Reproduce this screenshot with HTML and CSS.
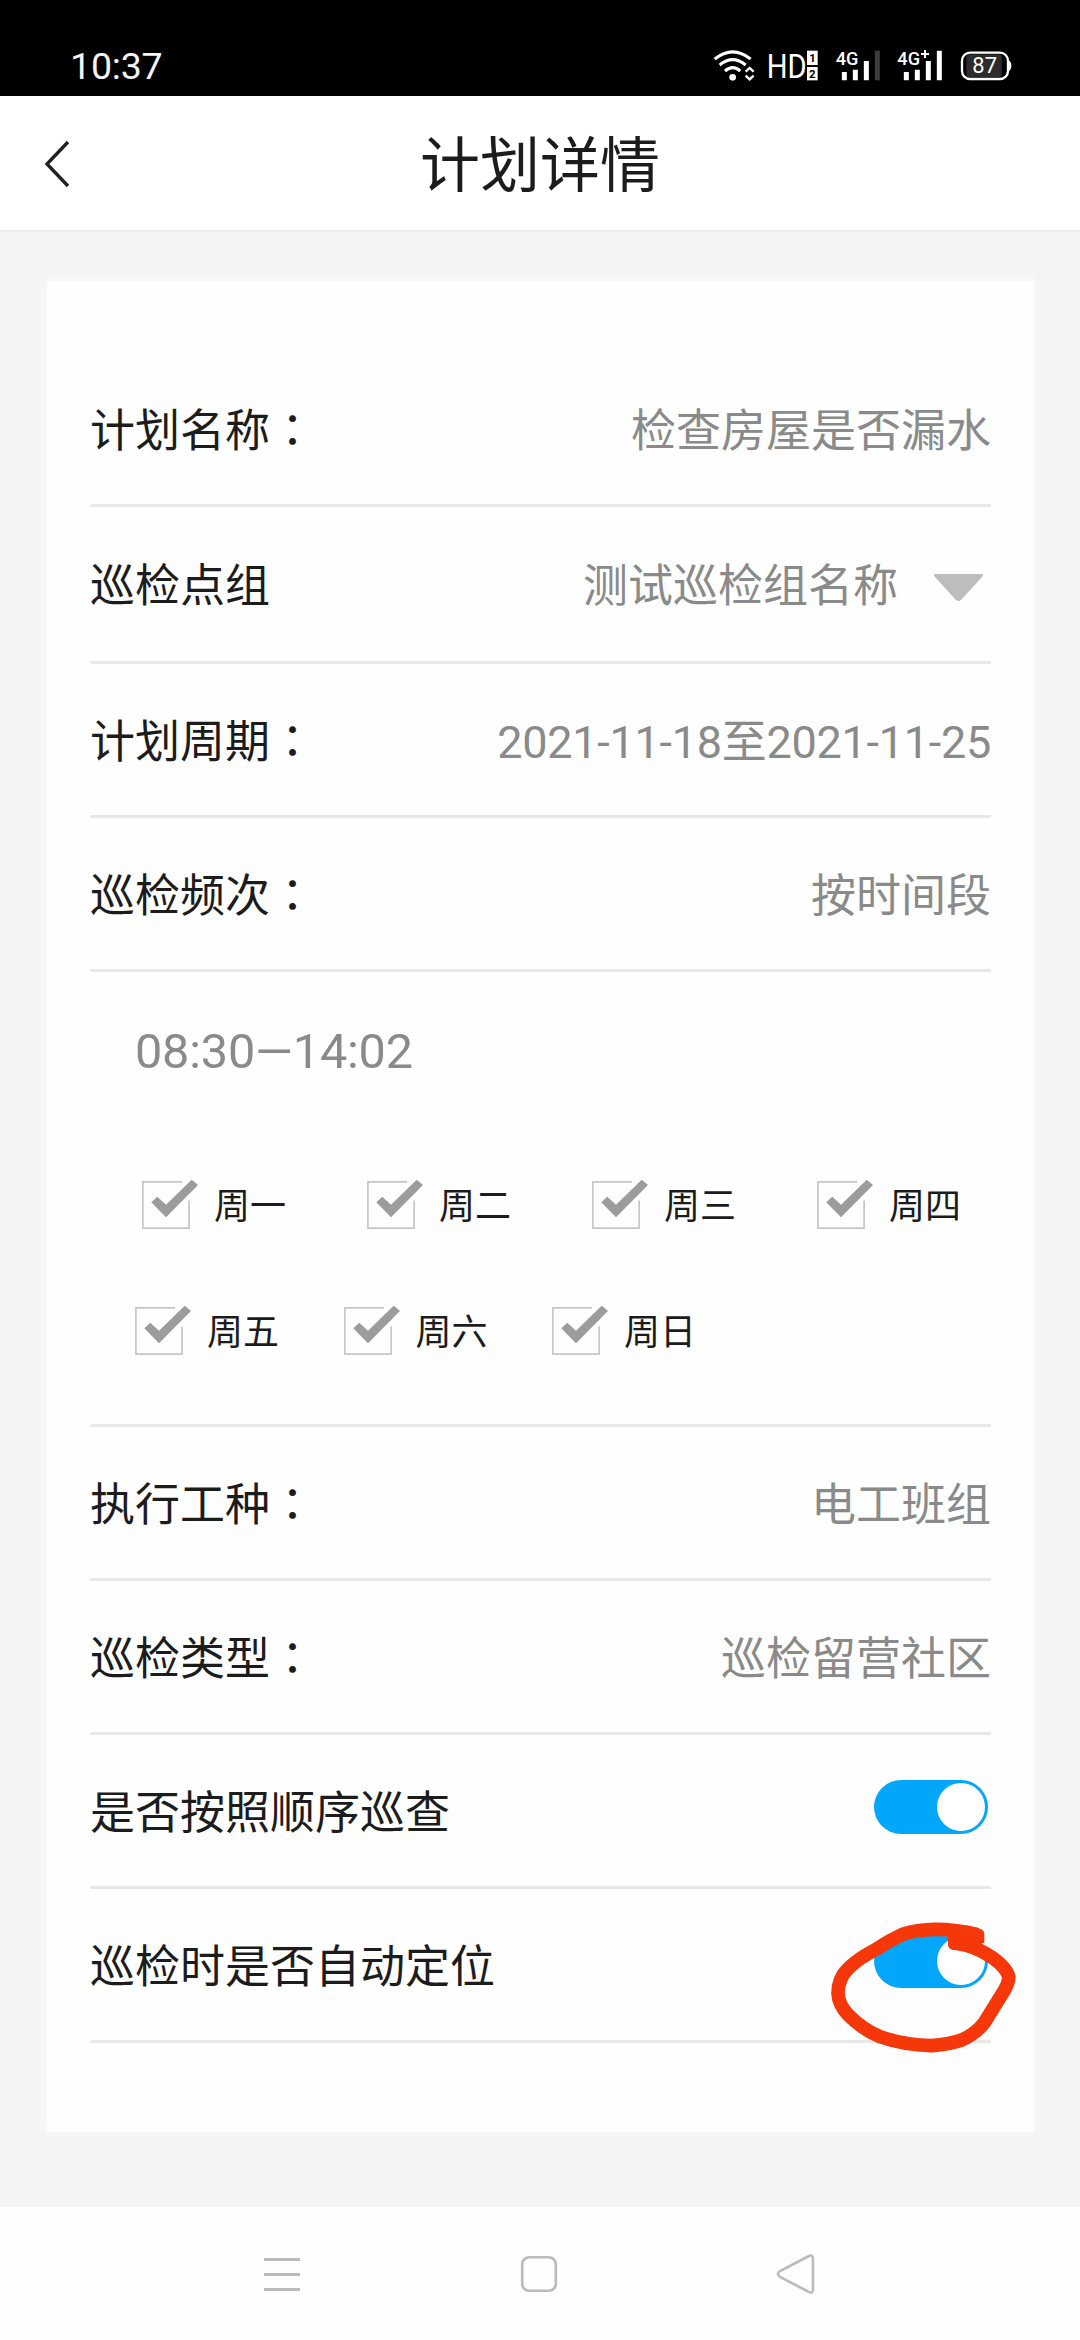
FILE: index.html
```html
<!DOCTYPE html>
<html lang="zh-CN">
<head>
<meta charset="utf-8">
<title>计划详情</title>
<link rel="stylesheet" href="styles.css">
</head>
<body>
<svg class="defs" width="0" height="0" aria-hidden="true">
  <symbol id="checkbox" viewBox="0 -3 60 54">
    <path d="M40 .9H.9V47.1H47.1V19.5" fill="none" stroke="#c6c6c6" stroke-width="1.7"/>
    <path d="M9.3 21.3L15.3 15.7L24 23.7L49.7-1.3L56 4L24 36.3Z" fill="#9c9c9c"/>
  </symbol>
</svg>
<div class="screen">
  <div class="status-bar">
    <span class="clock">10:37</span>
    <div class="status-icons">
      <svg class="wifi" viewBox="70 55 130 105">
        <g fill="none" stroke="#fff" stroke-width="9">
          <path d="M75 88Q129 45 183 88"/>
          <path d="M90 106Q129 74 168 106"/>
          <path d="M106 124Q129 104 152 124"/>
        </g>
        <circle cx="129" cy="143" r="10" fill="#fff"/>
        <path d="M168 126L180 115L192 126M168 138L180 149L192 138" fill="none" stroke="#fff" stroke-width="7"/>
      </svg>
      <svg class="hd" viewBox="235 55 150 105">
        <text class="st" x="231" y="144" font-size="100" textLength="120" lengthAdjust="spacingAndGlyphs">HD</text>
        <rect x="352" y="63" width="32" height="43" fill="#fff"/>
        <rect x="352" y="112" width="32" height="40" fill="#fff"/>
        <text class="st dark" x="359" y="97" font-size="34">1</text>
        <text class="st dark" x="358" y="144" font-size="34">2</text>
      </svg>
      <svg class="sig1" viewBox="435 55 140 105">
        <text class="st bold" x="437" y="106" font-size="56" textLength="68" lengthAdjust="spacingAndGlyphs">4G</text>
        <path d="M463 127V152M496 120V152M529 94V152" stroke="#fff" stroke-width="15"/>
        <path d="M562 63V152" stroke="#3c3c3c" stroke-width="15"/>
      </svg>
      <svg class="sig2" viewBox="622 55 138 105">
        <text class="st bold" x="623" y="106" font-size="56" textLength="68" lengthAdjust="spacingAndGlyphs">4G</text>
        <path d="M694 73H718M706 61V85" stroke="#fff" stroke-width="6"/>
        <path d="M650 127V152M683 120V152M716 94V152M749 63V152" stroke="#fff" stroke-width="15"/>
      </svg>
      <svg class="battery" viewBox="810 55 156 105">
        <rect x="829" y="74" width="106" height="68" rx="8" fill="#2c2c2c"/>
        <rect x="816" y="69" width="138" height="79" rx="24" fill="none" stroke="#fff" stroke-width="7"/>
        <path d="M955 92Q964 96 964 108T955 125Z" fill="#fff"/>
        <text class="st" x="847" y="131" font-size="66" textLength="74" lengthAdjust="spacingAndGlyphs">87</text>
      </svg>
    </div>
  </div>

  <header class="header">
    <svg class="back" viewBox="0 0 30 50"><path d="M25 3L4 25L25 47" fill="none" stroke="#222" stroke-width="3.4"/></svg>
    <h1 class="title">计划详情</h1>
  </header>

  <main class="content">
    <section class="card">
      <div class="row"><span>计划名称<i class="colon" lang="zh-TW">：</i></span><span class="value">检查房屋是否漏水</span></div>
      <div class="row row-select"><span>巡检点组</span><span class="value">测试巡检组名称<svg class="caret" viewBox="0 0 51 28"><path d="M2 0H49Q51 1 49 3L28 26Q26 28 23 26L2 3Q0 1 2 0Z" fill="#bdbdbd"/></svg></span></div>
      <div class="row"><span>计划周期<i class="colon" lang="zh-TW">：</i></span><span class="value period">2021-11-18至2021-11-25</span></div>
      <div class="row"><span>巡检频次<i class="colon" lang="zh-TW">：</i></span><span class="value">按时间段</span></div>
      <div class="schedule">
        <div class="time">08:30<span class="dash">—</span>14:02</div>
        <div class="days days-first">
          <span class="day"><svg><use href="#checkbox"/></svg>周一</span>
          <span class="day"><svg><use href="#checkbox"/></svg>周二</span>
          <span class="day"><svg><use href="#checkbox"/></svg>周三</span>
          <span class="day"><svg><use href="#checkbox"/></svg>周四</span>
        </div>
        <div class="days days-second">
          <span class="day"><svg><use href="#checkbox"/></svg>周五</span>
          <span class="day"><svg><use href="#checkbox"/></svg>周六</span>
          <span class="day"><svg><use href="#checkbox"/></svg>周日</span>
        </div>
      </div>
      <div class="row"><span>执行工种<i class="colon" lang="zh-TW">：</i></span><span class="value">电工班组</span></div>
      <div class="row"><span>巡检类型<i class="colon" lang="zh-TW">：</i></span><span class="value">巡检留营社区</span></div>
      <div class="row"><span>是否按照顺序巡查</span><span class="toggle"><span class="knob"></span></span></div>
      <div class="row"><span>巡检时是否自动定位</span><span class="toggle"><span class="knob"></span></span></div>
    </section>
  </main>

  <nav class="nav">
    <svg viewBox="0 0 44 44"><path d="M4 7.5H40M4 22.5H40M4 37.5H40" stroke="#bbb" stroke-width="3"/></svg>
    <svg viewBox="0 0 44 44"><rect x="5.2" y="5.2" width="33.6" height="33.6" rx="7" fill="none" stroke="#bbb" stroke-width="2.6"/></svg>
    <svg viewBox="0 0 44 44"><path d="M34 4.5Q39 1.500 39 7V37Q39 42.500 34 39.500L6 25Q2 22 6 19Z" fill="none" stroke="#bbb" stroke-width="2.6"/></svg>
  </nav>

  <!-- hand-drawn marker round the last switch -->
  <svg class="marker" viewBox="0 0 870 1020">
    <path d="M592 584Q530 568 465 568Q410 569 370 582Q330 600 290 627Q235 655 205 685Q174 715 174 760Q176 795 205 825Q250 870 300 890Q370 915 455 917Q510 912 545 900Q590 880 615 845L665 764Q688 730 686 708Q677 682 640 655Q600 627 560 616L525 609L528 598L592 587" fill="none" stroke="#f5370a" stroke-width="41" stroke-linejoin="round"/>
    <path d="M500 560L590 563Q613 567 613 582V608L520 630Q503 628 504 610Z" fill="#f5370a"/>
  </svg>
</div>
</body>
</html>
```
FILE: styles.css
```css
* { box-sizing: border-box; }

body {
  margin: 0;
  background: #f4f4f4;
  color: #1c1c1c;
  font-family: Roboto, "Noto Sans CJK SC", sans-serif;
}

svg { display: block; flex: none; }

.defs { position: absolute; }

.screen {
  position: relative;
  display: flex;
  flex-direction: column;
  width: 1080px;
  height: 2340px;
  overflow: hidden;
}

.status-bar {
  display: flex;
  justify-content: space-between;
  height: 96px;
  padding: 0 68px 0 70px;
  background: #000;
  color: #fff;
}

.clock {
  padding-top: 43px;
  font-size: 37.500px;
  letter-spacing: -0.2px;
  line-height: 46px;
  color: #f4f4f4;
}

.status-icons { display: flex; padding-top: 48px; }
.status-icons svg { height: 35px; overflow: visible; }
.wifi { width: 43.300px; }
.hd { width: 50px; margin-left: 11.700px; }
.sig1 { width: 46.700px; margin-left: 16.700px; }
.sig2 { width: 46px; margin-left: 15.700px; }
.battery { width: 52px; margin-left: 16.700px; }
.st { fill: #fff; }
.bold { font-weight: 500; }
.dark { fill: #000; font-weight: 700; }

.header {
  display: grid;
  grid-template-columns: 80px 1fr 80px;
  align-items: center;
  height: 136px;
  background: #fff;
  border-bottom: 2px solid #ebebeb;
}

.back { width: 30px; height: 50px; margin: 1px 0 0 43px; }

.title {
  margin: 0;
  padding-top: 8px;
  font-size: 60px;
  font-weight: 400;
  line-height: 80px;
  text-align: center;
}

.content {
  height: 1975px;
  padding: 49px 46px 0 47px;
}

.card {
  height: 1851px;
  padding: 72px 43px 0;
  background: #fefefe;
  box-shadow: 0 0 7px 2px #fafafa;
}

.row {
  display: flex;
  align-items: center;
  justify-content: space-between;
  height: 154px;
  padding-top: 6px;
  border-bottom: 3px solid #e8e8e8;
  font-size: 45px;
  line-height: 60px;
}

.row-select { height: 157px; }

.value { display: flex; align-items: center; color: #8a8a8a; }
.period { letter-spacing: -0.27px; }
.colon { font-family: "Noto Sans CJK TC", sans-serif; font-style: normal; line-height: 0; }
.caret { width: 51px; height: 28px; margin: 2px 7px 0 35px; }

.schedule {
  height: 455px;
  padding-top: 50px;
  border-bottom: 3px solid #e8e8e8;
}

.time {
  padding-left: 45px;
  font-size: 48.600px;
  letter-spacing: -0.2px;
  line-height: 60px;
  color: #8a8a8a;
}

.days { display: flex; height: 54px; }
.days-first { margin: 96px 0 0 52px; gap: 81px; }
.days-second { margin: 72px 0 0 45px; gap: 64.500px; }

.day {
  display: flex;
  align-items: flex-start;
  gap: 12px;
  width: 144px;
  font-size: 36px;
  line-height: 59px;
  white-space: nowrap;
}
.day svg { width: 60px; height: 54px; }

.toggle {
  display: flex;
  justify-content: flex-end;
  width: 114px;
  height: 54px;
  margin: 0 3px 13px 0;
  padding: 3px;
  border-radius: 27px;
  background: #02a7fb;
}
.knob { width: 48px; height: 48px; border-radius: 50%; background: #fff; }

.nav {
  display: flex;
  justify-content: space-between;
  height: 133px;
  padding: 45px 262px 0 260px;
  background: #fefefe;
}
.nav svg { width: 44px; height: 44px; }

.marker {
  position: absolute;
  left: 780px;
  top: 1740px;
  width: 290px;
  height: 340px;
}
```
